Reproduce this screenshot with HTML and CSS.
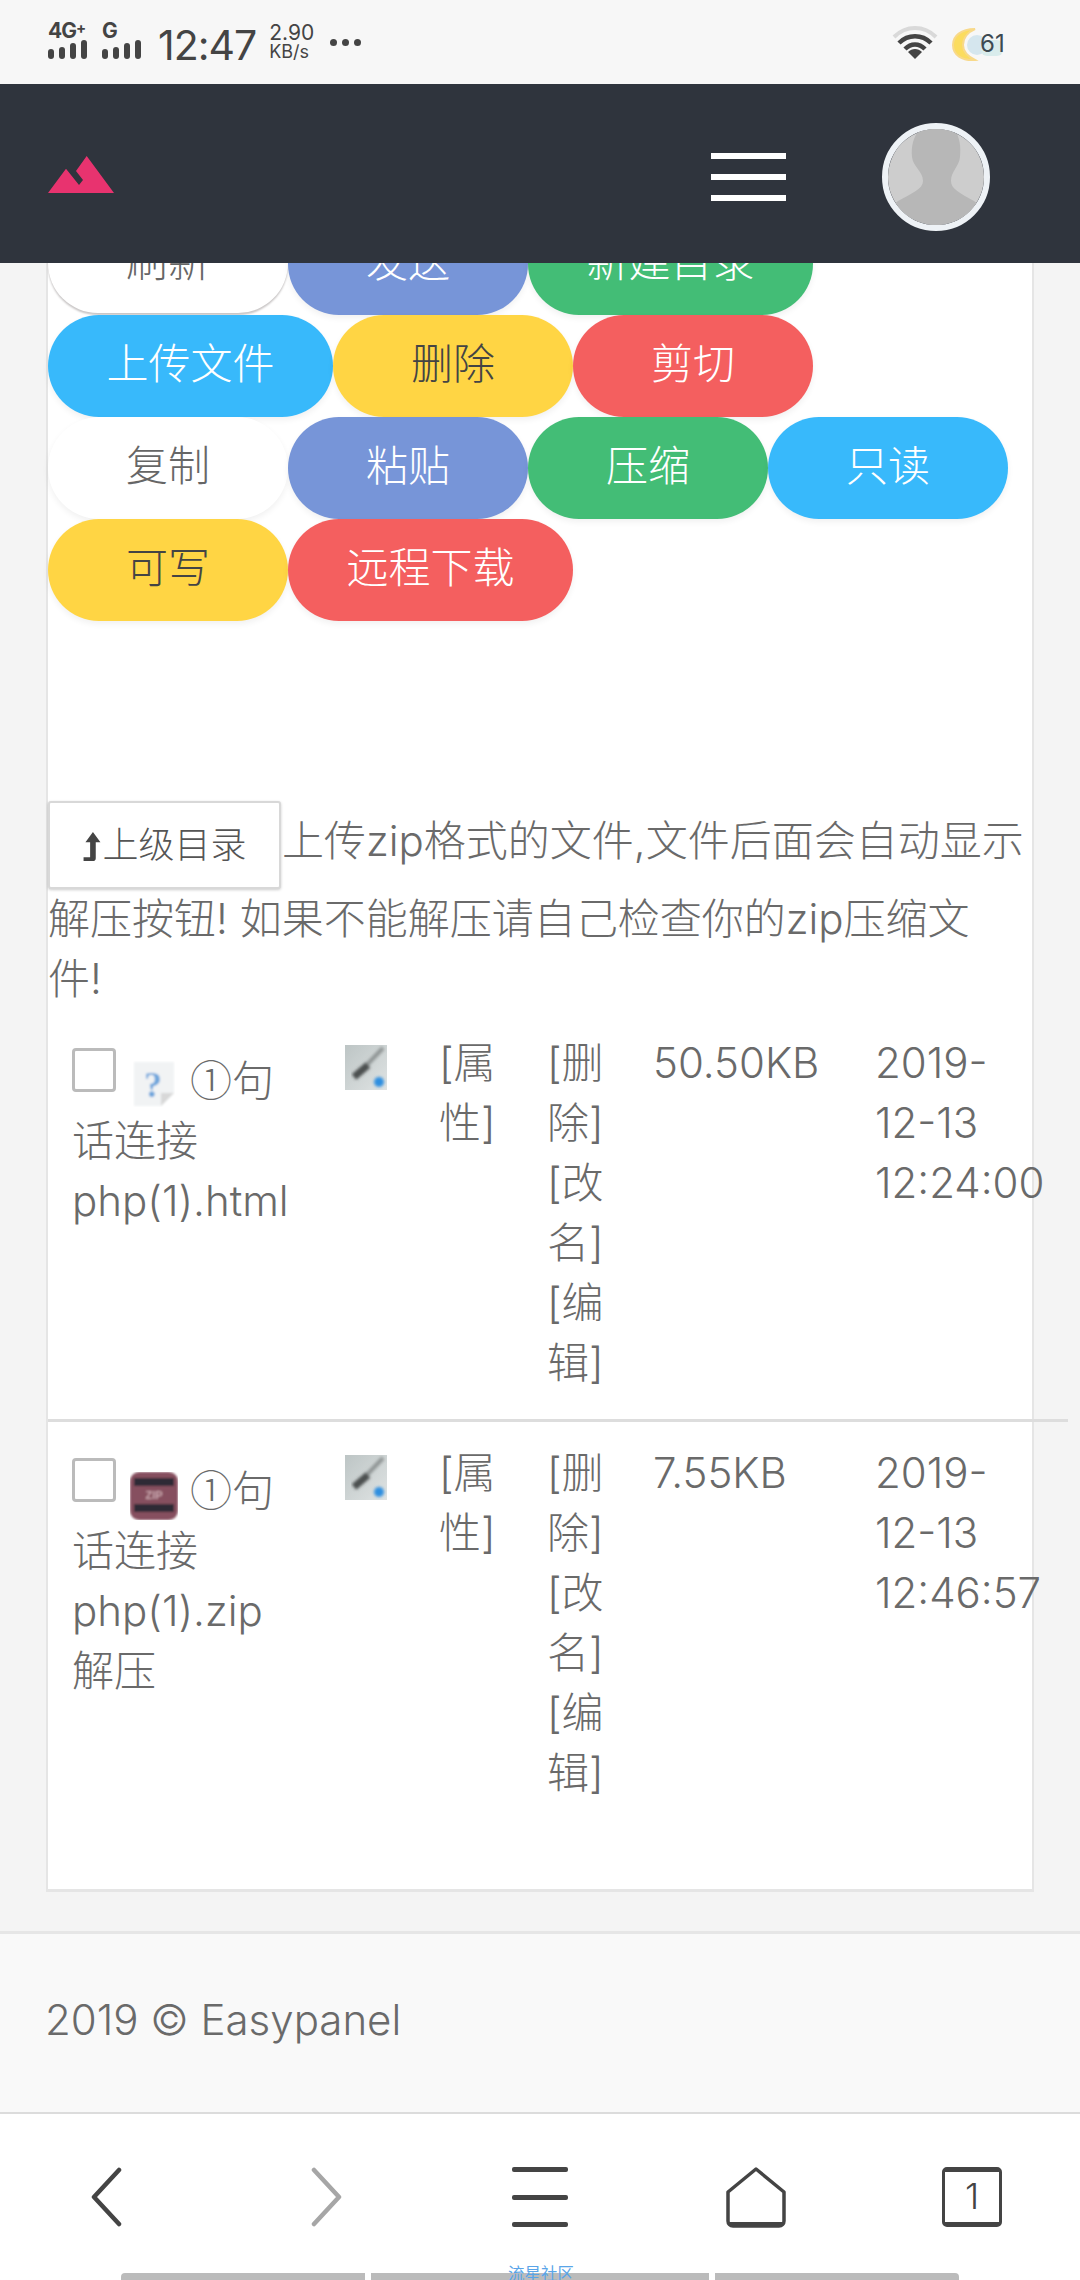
FILE: index.html
```html
<!DOCTYPE html>
<html lang="zh-CN">
<head>
  <meta charset="UTF-8">
  <meta name="viewport" content="width=device-width, initial-scale=1.0">
  <title>Easypanel</title>
  <link rel="stylesheet" href="styles.css">
</head>
<body>
  <div class="status-bar">
    <div class="signal">
      <span class="signal-name">4G<sup>+</sup></span>
      <span class="bars"><i class="b1"></i><i class="b2"></i><i class="b3"></i><i class="b4"></i></span>
    </div>
    <div class="signal signal-second">
      <span class="signal-name">G</span>
      <span class="bars"><i class="b1"></i><i class="b2"></i><i class="b3"></i><i class="b4"></i></span>
    </div>
    <span class="clock">12:47</span>
    <span class="speed"><span>2.90</span><span class="speed-unit">KB/s</span></span>
    <span class="dots"><i></i><i></i><i></i></span>
    <svg class="wifi" width="46" height="34" viewBox="0 0 46 34">
      <path d="M2 11C14 -1 32 -1 44 11" fill="none" stroke="#d9d9d9" stroke-width="4"/>
      <path d="M7 17C16 8 30 8 39 17" fill="none" stroke="#444" stroke-width="4.5"/>
      <path d="M13 23C19 17 27 17 33 23" fill="none" stroke="#444" stroke-width="4.5"/>
      <path d="M16 26C20 22 26 22 30 26L23 33Z" fill="#444"/>
    </svg>
    <span class="battery">
      <svg class="moon" width="56" height="34" viewBox="0 0 56 34">
        <circle cx="26" cy="17" r="10" fill="#d5e6ee"/>
        <rect x="30" y="12" width="22" height="16" rx="6" fill="#d9ecec"/>
        <path d="M24 1C10 1 2 8 2 17C2 27 11 33 24 32C16 28 12 23 12 17C12 10 17 4 24 1Z" fill="#fbdc5e" stroke="#f8d98a" stroke-width="2"/>
      </svg>
      <span class="battery-num">61</span>
    </span>
  </div>

  <header class="navbar">
    <svg class="logo" width="66" height="37" viewBox="0 0 66 37">
      <path d="M38.7 0L66 37H0L18 12.7L31 29L35 24L28 15Z" fill="#e8336f"/>
    </svg>
    <div class="menu-toggle"><span></span><span></span><span></span></div>
    <div class="avatar">
      <svg width="96" height="96" viewBox="0 0 96 96">
        <rect width="96" height="96" fill="#cdcdcd"/>
        <path d="M32 0H66C72 8 73 18 72 28C71 38 63 42 63 52C63 60 72 64 86 72L96 80V96H0V80L10 72C24 64 35 60 35 52C35 42 25 38 24 28C23 18 25 8 32 0Z" fill="#b7b7b7"/>
      </svg>
    </div>
  </header>

  <main class="content">
    <section class="card">
      <div class="toolbar">
        <button class="btn btn-white btn-raised">刷新</button>
        <button class="btn btn-indigo">发送</button>
        <button class="btn btn-green">新建目录</button>
        <button class="btn btn-sky">上传文件</button>
        <button class="btn btn-yellow">删除</button>
        <button class="btn btn-red">剪切</button>
        <button class="btn btn-white">复制</button>
        <button class="btn btn-indigo">粘贴</button>
        <button class="btn btn-green">压缩</button>
        <button class="btn btn-sky">只读</button>
        <button class="btn btn-yellow">可写</button>
        <button class="btn btn-red">远程下载</button>
      </div>

      <p class="notice">
        <a class="up-btn"><svg class="up-icon" width="20" height="30" viewBox="0 0 20 32"><path d="M11 0L19 11H14V28C14 30 13 31 11 31H1V27H8V11H3Z" fill="#444"/></svg>上级目录</a>上传zip格式的文件,文件后面会自动显示解压按钮! 如果不能解压请自己检查你的zip压缩文<br>件!
      </p>

      <table class="files">
        <tr>
          <td>
            <div class="name-top">
              <input class="check" type="checkbox">
              <svg class="file-icon file-unknown" width="42" height="46" viewBox="0 0 42 46">
                <defs><filter id="soft"><feGaussianBlur stdDeviation="1.1"/></filter></defs>
                <g filter="url(#soft)">
                  <path d="M1 1H41V32L28 45H1Z" fill="#f1f3f4"/>
                  <path d="M41 32L28 45V32Z" fill="#d8d8d8"/>
                  <text x="20" y="36" text-anchor="middle" font-family="Liberation Serif" font-weight="700" font-size="36" fill="#6fa6dc">?</text>
                </g>
              </svg>
              <span class="name-lead">①句</span>
            </div>
            话连接<br>php(1).html
          </td>
          <td>
            <svg class="edit-icon" width="42" height="45" viewBox="0 0 42 45">
              <defs>
                <filter id="soft2"><feGaussianBlur stdDeviation="1.4"/></filter>
                <linearGradient id="paper" x1="0" y1="0" x2="1" y2="1">
                  <stop offset="0" stop-color="#bdc5c5"/>
                  <stop offset="1" stop-color="#dfe3e3"/>
                </linearGradient>
              </defs>
              <rect width="42" height="45" fill="url(#paper)"/>
              <g filter="url(#soft2)">
                <path d="M38 3L14 28" stroke="#8f9494" stroke-width="4"/>
                <path d="M23 20L9 32" stroke="#4c4f4f" stroke-width="7"/>
                <circle cx="34" cy="37" r="5" fill="#2f8fe0"/>
              </g>
            </svg>
          </td>
          <td>[属性]</td>
          <td>[删除]<br>[改名]<br>[编辑]</td>
          <td>50.50KB</td>
          <td>2019-<br>12-13<br>12:24:00</td>
        </tr>
        <tr>
          <td>
            <div class="name-top">
              <input class="check" type="checkbox">
              <svg class="file-icon file-zip" width="48" height="48" viewBox="0 0 48 48">
                <defs><filter id="soft3"><feGaussianBlur stdDeviation="0.9"/></filter></defs>
                <g filter="url(#soft3)">
                  <rect width="48" height="48" rx="9" fill="#86505e"/>
                  <rect x="4" y="6" width="40" height="8" fill="#2d2a35"/>
                  <rect x="4" y="32" width="40" height="8" fill="#2d2a35"/>
                  <text x="24" y="27" text-anchor="middle" font-family="Liberation Sans" font-weight="700" font-size="11" fill="#c9a5ad">ZIP</text>
                </g>
              </svg>
              <span class="name-lead">①句</span>
            </div>
            话连接<br>php(1).zip<br>解压
          </td>
          <td>
            <svg class="edit-icon" width="42" height="45" viewBox="0 0 42 45">
              <rect width="42" height="45" fill="url(#paper)"/>
              <g filter="url(#soft2)">
                <path d="M38 3L14 28" stroke="#8f9494" stroke-width="4"/>
                <path d="M23 20L9 32" stroke="#4c4f4f" stroke-width="7"/>
                <circle cx="34" cy="37" r="5" fill="#2f8fe0"/>
              </g>
            </svg>
          </td>
          <td>[属性]</td>
          <td>[删除]<br>[改名]<br>[编辑]</td>
          <td>7.55KB</td>
          <td>2019-<br>12-13<br>12:46:57</td>
        </tr>
      </table>
    </section>
  </main>

  <footer class="footer">2019 © Easypanel</footer>

  <nav class="browser-bar">
    <div class="browser-icons">
      <svg class="nav-back" width="32" height="60" viewBox="0 0 32 60"><path d="M29 3L4 30L29 57" fill="none" stroke="#444" stroke-width="4.5" stroke-linecap="round" stroke-linejoin="round"/></svg>
      <svg class="nav-forward" width="32" height="60" viewBox="0 0 32 60"><path d="M3 3L28 30L3 57" fill="none" stroke="#a6a6a6" stroke-width="4.5" stroke-linecap="round" stroke-linejoin="round"/></svg>
      <div class="browser-menu"><span></span><span></span><span></span></div>
      <svg width="60" height="62" viewBox="0 0 60 62"><path d="M30 3L58 26V55C58 58 56 60 53 60H7C4 60 2 58 2 55V26Z" fill="none" stroke="#444" stroke-width="3.5" stroke-linejoin="round"/><path d="M3 56H57V58C57 60 55 61 53 61H7C5 61 3 60 3 58Z" fill="#444"/></svg>
      <div class="tab-count">1</div>
    </div>
    <div class="gesture">
      <span class="gesture-part gesture-left"></span>
      <span class="gesture-part gesture-mid"></span>
      <span class="gesture-part gesture-right"></span>
      <span class="gesture-label">流星社区</span>
    </div>
  </nav>
</body>
</html>
```

FILE: styles.css
```css
* {
  margin: 0;
  padding: 0;
  box-sizing: border-box;
}

body {
  width: 1080px;
  height: 2280px;
  overflow: hidden;
  display: flex;
  flex-direction: column;
  font-family: 'Inter', 'Noto Sans CJK SC', sans-serif;
  font-weight: 300;
  font-size: 42px;
  line-height: 60px;
  color: #6a6a6a;
  background: #f4f4f4;
}

/* status bar */
.status-bar {
  height: 84px;
  flex: none;
  display: flex;
  align-items: flex-start;
  padding-left: 48px;
  background: #f7f7f7;
  color: #444;
}

.signal {
  width: 42px;
  margin-top: 23px;
  display: flex;
  flex-direction: column;
}

.signal-second {
  margin-left: 12px;
}

.signal-name {
  height: 16px;
  font-size: 21px;
  line-height: 16px;
  font-weight: 700;
  letter-spacing: -1px;
}

.signal-name sup {
  font-size: 15px;
  line-height: 0;
  vertical-align: 5px;
}

.bars {
  height: 20px;
  display: flex;
  align-items: flex-end;
  gap: 5px;
}

.bars i {
  width: 6px;
  border-radius: 3px;
  background: #444;
}

.bars .b1 { height: 10px; }
.bars .b2 { height: 12px; }
.bars .b3 { height: 16px; }
.bars .b4 { height: 19px; }

.clock {
  margin-left: 14px;
  margin-top: 22px;
  font-size: 41px;
  line-height: 46px;
  font-weight: 400;
  letter-spacing: -1px;
}

.speed {
  margin-left: 13px;
  margin-top: 23px;
  display: flex;
  flex-direction: column;
  font-size: 21px;
  line-height: 19px;
  font-weight: 400;
}

.speed-unit {
  font-size: 18px;
}

.dots {
  margin-left: 16px;
  margin-top: 39px;
  display: flex;
  gap: 5px;
}

.dots i {
  width: 7px;
  height: 7px;
  border-radius: 50%;
  background: #444;
}

.wifi {
  margin-left: auto;
  margin-top: 26px;
}

.battery {
  margin-left: 13px;
  margin-right: 73px;
  margin-top: 28px;
  display: flex;
  position: relative;
}

.battery-num {
  position: absolute;
  left: 29px;
  top: 2px;
  font-size: 24px;
  line-height: 28px;
  font-weight: 400;
  color: #3d4a52;
}

/* top navbar */
.navbar {
  height: 179px;
  flex: none;
  display: flex;
  align-items: center;
  padding: 6px 90px 0 48px;
  background: #2f343d;
  position: relative;
  z-index: 2;
}

.logo {
  margin-top: -4px;
}

.menu-toggle {
  width: 75px;
  margin-left: auto;
  margin-right: 96px;
  display: flex;
  flex-direction: column;
  gap: 15px;
}

.menu-toggle span {
  height: 6px;
  background: #fff;
}

.avatar {
  width: 108px;
  height: 108px;
  border-radius: 50%;
  border: 6px solid #eef2f6;
  overflow: hidden;
}

.avatar svg {
  display: block;
}

/* content */
.content {
  height: 1668px;
  flex: none;
  padding: 0 46px;
  overflow: hidden;
}

.card {
  width: 988px;
  height: 1679px;
  background: #fff;
  border: solid #e5e5e5;
  border-width: 0 2px 3px;
}

.toolbar {
  margin-top: -50px;
  width: 985px;
  height: 588px;
  display: flex;
  flex-wrap: wrap;
  align-content: flex-start;
}

.btn {
  height: 102px;
  min-width: 240px;
  padding: 0 58.5px 4px;
  border: 0;
  border-radius: 51px;
  font-family: inherit;
  font-weight: 300;
  font-size: 42px;
  line-height: 98px;
  color: #fff;
  box-shadow: 0 3px 6px rgba(0, 0, 0, 0.06);
}

.btn-white {
  background: #fff;
  color: #666;
}

.btn-raised {
  box-shadow: 0 2px 2px #c9c6c6;
  height: 100px;
}

.btn-indigo { background: #7795d8; }
.btn-green { background: #43bd76; }
.btn-sky { background: #38b9fb; }
.btn-yellow { background: #ffd544; color: #444; }
.btn-red { background: #f45f5f; }

.notice {
  width: 985px;
}

.up-btn {
  display: inline-block;
  width: 233px;
  height: 88px;
  margin-right: 1px;
  vertical-align: -2px;
  border: 2px solid #d8d8d8;
  border-radius: 3px;
  background: #fff;
  box-shadow: 0 1px 3px rgba(0, 0, 0, 0.2);
  font-size: 36px;
  line-height: 84px;
  text-align: center;
  color: #555;
}

.up-icon {
  vertical-align: -4px;
}

.files {
  width: 1020px;
  margin-top: -2px;
  table-layout: fixed;
  border-collapse: collapse;
}

.files td {
  padding: 26px 0 26px;
  vertical-align: top;
}

.files tr + tr td {
  padding-top: 21px;
  border-top: 3px solid #ddd;
}

.files td:nth-child(1) { width: 297px; padding-left: 24px; }
.files td:nth-child(2) { width: 94px; }
.files td:nth-child(3) { width: 108px; padding-right: 30px; }
.files td:nth-child(4) { width: 106px; padding-right: 30px; }
.files td:nth-child(5) { width: 222px; }

.name-top {
  height: 78px;
  display: flex;
  align-items: flex-start;
}

.check {
  appearance: none;
  width: 44px;
  height: 44px;
  margin-top: 15px;
  border: 3px solid #bbb;
  border-radius: 4px;
  background: #fff;
}

.file-icon {
  flex: none;
}

.file-unknown {
  margin: 28px 15px 0 17px;
}

.file-zip {
  margin: 29px 12px 0 14px;
}

.name-lead {
  margin-top: 15px;
  font-family: 'Noto Sans CJK SC', sans-serif;
}

.edit-icon {
  display: block;
  margin-top: 12px;
}

/* footer */
.footer {
  height: 183px;
  flex: none;
  padding: 0 45px;
  line-height: 172px;
  background: #f9f9f9;
  border-top: 3px solid #e6e6e6;
  border-bottom: 2px solid #dcdcdc;
}

/* browser bottom bar */
.browser-bar {
  flex: 1;
  display: flex;
  flex-direction: column;
  background: #fff;
  position: relative;
}

.browser-icons {
  display: grid;
  grid-template-columns: repeat(5, 216px);
  justify-items: center;
  align-items: center;
  height: 60px;
  margin-top: 52px;
}

.nav-back {
  margin-right: 5px;
}

.nav-forward {
  margin-left: 5px;
}

.browser-menu {
  width: 56px;
  height: 60px;
  display: flex;
  flex-direction: column;
  justify-content: space-between;
}

.browser-menu span {
  height: 5px;
  border-radius: 2px;
  background: #444;
}

.tab-count {
  width: 60px;
  height: 60px;
  border: 3px solid #444;
  border-top-width: 5px;
  border-bottom-width: 5px;
  border-radius: 5px;
  font-size: 36px;
  line-height: 48px;
  font-weight: 300;
  text-align: center;
  color: #444;
}

.gesture {
  margin-top: auto;
  display: flex;
  justify-content: center;
  gap: 6px;
  position: relative;
}

.gesture-part {
  height: 7px;
  background: #bbb;
}

.gesture-left { width: 244px; border-radius: 4px 0 0; }
.gesture-mid { width: 338px; }
.gesture-right { width: 244px; border-radius: 0 4px 0 0; }

.gesture-label {
  position: absolute;
  left: 508px;
  bottom: -4px;
  font-size: 16.5px;
  line-height: 20px;
  font-weight: 400;
  color: #5aa5e8;
}
```
